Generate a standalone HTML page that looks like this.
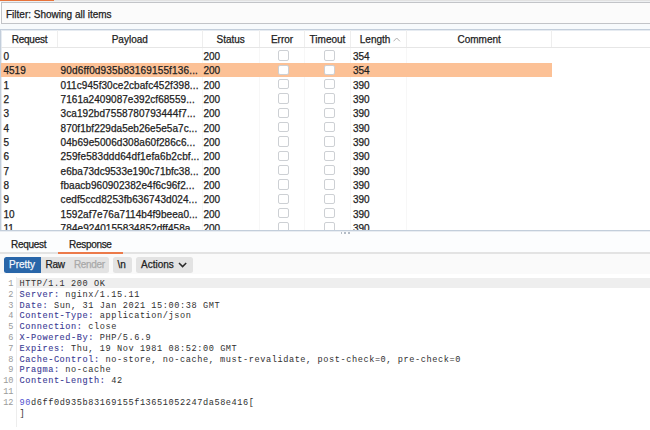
<!DOCTYPE html>
<html><head><meta charset="utf-8">
<style>
*{margin:0;padding:0;box-sizing:border-box}
html,body{width:650px;height:430px;overflow:hidden;background:#fff}
body{position:relative;font-family:"Liberation Sans",sans-serif;font-size:10px;color:#222;-webkit-text-stroke-width:0.25px}
.a{position:absolute}
#top{left:0;top:0;width:650px;height:2px;background:linear-gradient(#e2e2e2 0,#e2e2e2 1.2px,#eef0f2 1.2px)}
#toporange{left:0;top:0;width:53.5px;height:1.2px;background:#e8733a}
#filter{left:1px;top:2px;width:660px;height:22px;border:1px solid #c2c4c8;background:#fbfbfb}
#filtertxt{left:6px;top:9px;line-height:11px;font-size:10px;white-space:nowrap}
#gap{left:0;top:24px;width:650px;height:5px;background:#f7fafc}
#tbl{left:0;top:29px;width:660px;height:202px;border:1px solid #c3cedb;border-right:none;background:#fff;overflow:hidden;box-shadow:inset 0 1px 0 #e6ebf1,inset 1px 0 0 #e6ebf1}
.hd{position:absolute;top:0;height:17px;line-height:17px;padding-top:0.5px;text-align:center;border-right:1px solid #eeeeee;white-space:nowrap}
#hdline{left:0;top:17px;width:660px;height:1.3px;background:#e6e6e6}
.row{position:absolute;left:0;width:551px;height:14.33px;line-height:14.33px;white-space:nowrap}
.row span{position:absolute;top:1.8px}
.sel{background:#fcc196}
.cb{position:absolute;width:10.5px;height:10.5px;border:1px solid #cdd0d4;border-radius:2px;background:#fff;top:2px}
.vl{position:absolute;top:18px;width:1px;height:190px;background:#f7f7f7}
#tabs{left:0;top:231px;width:650px;height:21px;background:#fcfdfe;box-shadow:inset 0 1px 0 #e9edf2}
#tabline{left:0;top:252px;width:650px;height:2px;background:#e3e3e3}
#tabul{left:58px;top:252px;width:64.5px;height:1.7px;background:#ec7a4a}
.tab{position:absolute;top:237.5px;line-height:13px;font-size:10px;letter-spacing:-0.3px}
#tool{left:0;top:254px;width:650px;height:19.5px;background:#fafafa}
.btn{position:absolute;top:257.2px;height:15.4px;line-height:15.4px;padding-top:0.3px;border-radius:2.5px;background:#e3e3e3;font-size:10px;white-space:nowrap}
#code{left:0;top:273.5px;width:650px;height:157px;background:#fff}
#hl{left:16px;top:277.5px;width:634px;height:10.5px;background:#eeeeee}
#gut{left:16px;top:277px;width:1px;height:150px;background:#ededed}
.ln{position:absolute;-webkit-text-stroke-width:0;left:0;width:13.5px;text-align:right;font-family:"Liberation Mono",monospace;font-size:8.6px;color:#9a9a9a;height:10.8px;line-height:10.8px}
.cl{position:absolute;-webkit-text-stroke-width:0;left:19.5px;font-family:"Liberation Mono",monospace;font-size:8.6px;letter-spacing:0.575px;color:#303030;height:10.8px;line-height:10.8px;white-space:pre}
.k{color:#3a3a94;-webkit-text-stroke-width:0.1px;letter-spacing:0.575px}
</style></head><body>
<div class="a" id="top"></div>
<div class="a" id="toporange"></div>
<div class="a" id="filter"></div>
<div class="a" id="filtertxt">Filter: Showing all items</div>
<div class="a" id="gap"></div>
<div class="a" id="tbl">
  <div class="hd" style="left:0;width:57px;letter-spacing:-0.25px;padding-left:1px">Request</div>
  <div class="hd" style="left:57px;width:144.5px">Payload</div>
  <div class="hd" style="left:201.5px;width:57.3px">Status</div>
  <div class="hd" style="left:258.8px;width:45.4px">Error</div>
  <div class="hd" style="left:304.2px;width:45.6px">Timeout</div>
  <div class="hd" style="left:349.8px;width:56.6px;padding-right:7px">Length<svg style="position:absolute;left:42.5px;top:6.8px" width="8" height="5" viewBox="0 0 8 5"><path d="M0.5 4.3 L3.7 1 L6.9 4.3" fill="none" stroke="#b0b0b0" stroke-width="1"/></svg></div>
  <div class="hd" style="left:406.4px;width:144.6px">Comment</div>
  <div class="a" id="hdline"></div>
  <div class="vl" style="left:201px"></div>
  <div class="vl" style="left:257.5px"></div>
  <div class="vl" style="left:303px"></div>
  <div class="vl" style="left:348.5px"></div>
  <div class="vl" style="left:405px"></div>
<div class="row" style="top:18.20px"><span style="left:2.5px">0</span><span style="left:59.6px;letter-spacing:0.000px"></span><span style="left:202.5px">200</span><i class="cb" style="left:277.3px"></i><i class="cb" style="left:323.2px"></i><span style="left:352px">354</span></div>
<div class="row sel" style="top:32.53px"><span style="left:2.5px">4519</span><span style="left:59.6px;letter-spacing:0.152px">90d6ff0d935b83169155f136<b style="font-weight:normal;letter-spacing:0.15px">...</b></span><span style="left:202.5px">200</span><i class="cb" style="left:277.3px"></i><i class="cb" style="left:323.2px"></i><span style="left:352px">354</span></div>
<div class="row" style="top:46.86px"><span style="left:2.5px">1</span><span style="left:59.6px;letter-spacing:0.060px">011c945f30ce2cbafc452f398<b style="font-weight:normal;letter-spacing:0.15px">...</b></span><span style="left:202.5px">200</span><i class="cb" style="left:277.3px"></i><i class="cb" style="left:323.2px"></i><span style="left:352px">390</span></div>
<div class="row" style="top:61.19px"><span style="left:2.5px">2</span><span style="left:59.6px;letter-spacing:0.044px">7161a2409087e392cf68559<b style="font-weight:normal;letter-spacing:0.15px">...</b></span><span style="left:202.5px">200</span><i class="cb" style="left:277.3px"></i><i class="cb" style="left:323.2px"></i><span style="left:352px">390</span></div>
<div class="row" style="top:75.52px"><span style="left:2.5px">3</span><span style="left:59.6px;letter-spacing:0.074px">3ca192bd7558780793444f7<b style="font-weight:normal;letter-spacing:0.15px">...</b></span><span style="left:202.5px">200</span><i class="cb" style="left:277.3px"></i><i class="cb" style="left:323.2px"></i><span style="left:352px">390</span></div>
<div class="row" style="top:89.85px"><span style="left:2.5px">4</span><span style="left:59.6px;letter-spacing:0.030px">870f1bf229da5eb26e5e5a7c<b style="font-weight:normal;letter-spacing:0.15px">...</b></span><span style="left:202.5px">200</span><i class="cb" style="left:277.3px"></i><i class="cb" style="left:323.2px"></i><span style="left:352px">390</span></div>
<div class="row" style="top:104.18px"><span style="left:2.5px">5</span><span style="left:59.6px;letter-spacing:0.059px">04b69e5006d308a60f286c6<b style="font-weight:normal;letter-spacing:0.15px">...</b></span><span style="left:202.5px">200</span><i class="cb" style="left:277.3px"></i><i class="cb" style="left:323.2px"></i><span style="left:352px">390</span></div>
<div class="row" style="top:118.51px"><span style="left:2.5px">6</span><span style="left:59.6px;letter-spacing:0.110px">259fe583ddd64df1efa6b2cbf<b style="font-weight:normal;letter-spacing:0.15px">...</b></span><span style="left:202.5px">200</span><i class="cb" style="left:277.3px"></i><i class="cb" style="left:323.2px"></i><span style="left:352px">390</span></div>
<div class="row" style="top:132.84px"><span style="left:2.5px">7</span><span style="left:59.6px;letter-spacing:0.017px">e6ba73dc9533e190c71bfc38<b style="font-weight:normal;letter-spacing:0.15px">...</b></span><span style="left:202.5px">200</span><i class="cb" style="left:277.3px"></i><i class="cb" style="left:323.2px"></i><span style="left:352px">390</span></div>
<div class="row" style="top:147.17px"><span style="left:2.5px">8</span><span style="left:59.6px;letter-spacing:0.050px">fbaacb960902382e4f6c96f2<b style="font-weight:normal;letter-spacing:0.15px">...</b></span><span style="left:202.5px">200</span><i class="cb" style="left:277.3px"></i><i class="cb" style="left:323.2px"></i><span style="left:352px">390</span></div>
<div class="row" style="top:161.50px"><span style="left:2.5px">9</span><span style="left:59.6px;letter-spacing:0.072px">cedf5ccd8253fb636743d024<b style="font-weight:normal;letter-spacing:0.15px">...</b></span><span style="left:202.5px">200</span><i class="cb" style="left:277.3px"></i><i class="cb" style="left:323.2px"></i><span style="left:352px">390</span></div>
<div class="row" style="top:175.83px"><span style="left:2.5px">10</span><span style="left:59.6px;letter-spacing:0.052px">1592af7e76a7114b4f9beea0<b style="font-weight:normal;letter-spacing:0.15px">...</b></span><span style="left:202.5px">200</span><i class="cb" style="left:277.3px"></i><i class="cb" style="left:323.2px"></i><span style="left:352px">390</span></div>
<div class="row" style="top:190.16px"><span style="left:2.5px">11</span><span style="left:59.6px;letter-spacing:0.091px">784e9240155834852dff458a<b style="font-weight:normal;letter-spacing:0.15px">...</b></span><span style="left:202.5px">200</span><i class="cb" style="left:277.3px"></i><i class="cb" style="left:323.2px"></i><span style="left:352px">390</span></div>
</div>
<div class="a" id="tabs"></div>
<div class="a" id="tabline"></div>
<div class="a" id="tabul"></div>
<i class="a" style="left:340.5px;top:232.3px;width:1.6px;height:1.6px;background:#b4bcc6"></i><i class="a" style="left:344.3px;top:232.3px;width:1.6px;height:1.6px;background:#b4bcc6"></i><i class="a" style="left:348px;top:232.3px;width:1.6px;height:1.6px;background:#b4bcc6"></i>
<div class="tab" style="left:11px">Request</div>
<div class="tab" style="left:69px">Response</div>
<div class="a" id="tool"></div>
<div class="btn" style="left:3.5px;width:37px;background:#2966a9;color:#f4f8fc;border-radius:2.5px 0 0 2.5px;padding-left:5.5px">Pretty</div>
<div class="btn" style="left:40.5px;width:68.5px;border-radius:0 2.5px 2.5px 0"><span style="position:absolute;left:5px;letter-spacing:-0.3px">Raw</span><span style="position:absolute;left:33.5px;color:#a9a9a9;letter-spacing:-0.35px">Render</span></div>
<div class="btn" style="left:113px;width:18.5px;padding-left:4.5px">\n</div>
<div class="btn" style="left:136px;width:56.5px;padding-left:5px">Actions <svg style="position:absolute;left:42px;top:5px" width="10" height="6" viewBox="0 0 10 6"><path d="M1 1 L4.6 4.6 L8.2 1" fill="none" stroke="#2a2a2a" stroke-width="1.5"/></svg></div>
<div class="a" id="code"></div>
<div class="a" id="hl"></div>
<div class="a" id="gut"></div>
<div class="ln" style="top:279.00px">1</div>
<div class="cl" style="top:279.00px">HTTP/1.1 200 OK</div>
<div class="ln" style="top:289.80px">2</div>
<div class="cl" style="top:289.80px"><span class="k">Server:</span> nginx/1.15.11</div>
<div class="ln" style="top:300.60px">3</div>
<div class="cl" style="top:300.60px"><span class="k">Date:</span> Sun, 31 Jan 2021 15:00:38 GMT</div>
<div class="ln" style="top:311.40px">4</div>
<div class="cl" style="top:311.40px"><span class="k">Content-Type:</span> application/json</div>
<div class="ln" style="top:322.20px">5</div>
<div class="cl" style="top:322.20px"><span class="k">Connection:</span> close</div>
<div class="ln" style="top:333.00px">6</div>
<div class="cl" style="top:333.00px"><span class="k">X-Powered-By:</span> PHP/5.6.9</div>
<div class="ln" style="top:343.80px">7</div>
<div class="cl" style="top:343.80px"><span class="k">Expires:</span> Thu, 19 Nov 1981 08:52:00 GMT</div>
<div class="ln" style="top:354.60px">8</div>
<div class="cl" style="top:354.60px"><span class="k">Cache-Control:</span> no-store, no-cache, must-revalidate, post-check=0, pre-check=0</div>
<div class="ln" style="top:365.40px">9</div>
<div class="cl" style="top:365.40px"><span class="k">Pragma:</span> no-cache</div>
<div class="ln" style="top:376.20px">10</div>
<div class="cl" style="top:376.20px"><span class="k">Content-Length:</span> 42</div>
<div class="ln" style="top:387.00px">11</div>
<div class="cl" style="top:387.00px"></div>
<div class="ln" style="top:397.80px">12</div>
<div class="cl" style="top:397.80px"><span style="color:#5050d0">90</span>d6ff0d935b83169155f13651052247da58e416[</div>
<div class="cl" style="top:408.60px">]</div>
</body></html>
